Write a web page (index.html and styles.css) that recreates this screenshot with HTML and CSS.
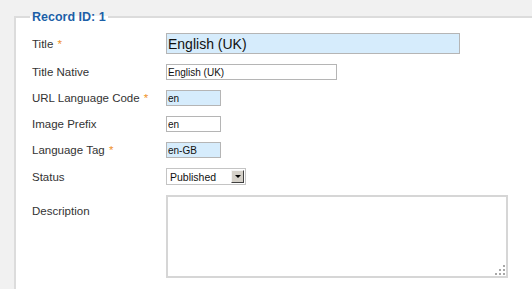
FILE: index.html
```html
<!DOCTYPE html>
<html lang="en">
<head>
  <meta charset="UTF-8" />
  <title>Edit Language</title>
  <link rel="stylesheet" href="styles.css">
</head>
<body>

  <fieldset class="record">
    <legend>Record ID: 1</legend>

    <div class="form-grid">
      <label class="form-label" for="title">Title <span class="req">*</span></label>
      <input class="field field-large field-req" id="title" type="text" value="English (UK)">

      <label class="form-label" for="title_native">Title Native</label>
      <input class="field field-medium" id="title_native" type="text" value="English (UK)">

      <label class="form-label" for="sef">URL Language Code <span class="req">*</span></label>
      <input class="field field-small field-req" id="sef" type="text" value="en">

      <label class="form-label" for="image">Image Prefix</label>
      <input class="field field-small" id="image" type="text" value="en">

      <label class="form-label" for="lang_code">Language Tag <span class="req">*</span></label>
      <input class="field field-small field-req" id="lang_code" type="text" value="en-GB">

      <label class="form-label" for="published">Status</label>
      <div class="select-box">
        <select id="published">
          <option selected>Published</option>
          <option>Unpublished</option>
          <option>Trashed</option>
        </select>
        <span class="select-btn"><span class="arrow"></span></span>
      </div>

      <label class="form-label label-top" for="description">Description</label>
      <div class="textarea-box">
        <textarea id="description"></textarea>
        <svg class="grip" width="10" height="10" viewBox="0 0 10 10">
          <rect x="8" y="0" width="2" height="2" fill="#a8a8a8"/>
          <rect x="4" y="4" width="2" height="2" fill="#a8a8a8"/>
          <rect x="8" y="4" width="2" height="2" fill="#a8a8a8"/>
          <rect x="0" y="8" width="2" height="2" fill="#a8a8a8"/>
          <rect x="4" y="8" width="2" height="2" fill="#a8a8a8"/>
          <rect x="8" y="8" width="2" height="2" fill="#a8a8a8"/>
        </svg>
      </div>
    </div>
  </fieldset>

</body>
</html>
```

FILE: styles.css
```css
body {
  margin: 0;
  background: #f1f1f1;
  font-family: 'Liberation Sans', Arial, sans-serif;
  color: #333;
  overflow: hidden;
}

.record {
  margin: 10px 0 0 14px;
  width: 600px;
  min-height: 400px;
  padding: 0 0 0 14px;
  border: 2px solid #dcdcdc;
  background: #fff;
  box-sizing: border-box;
}

.record legend {
  padding: 0 2px;
  font-size: 12.5px;
  font-weight: bold;
  color: #1d5fa7;
  line-height: 14px;
}

.form-grid {
  display: grid;
  grid-template-columns: 134px auto;
  justify-items: start;
  align-items: center;
  row-gap: 10px;
  padding: 9px 0 0 2px;
}

.form-label {
  font-size: 11.5px;
  color: #333;
}

.label-top {
  align-self: start;
  padding-top: 10px;
}

.req {
  color: #f0922a;
  margin-left: 1px;
}

.field {
  margin: 0;
  padding: 0 1px;
  border: 1px solid #b5b5b5;
  background: #fff;
  font-family: 'Liberation Sans', Arial, sans-serif;
  font-size: 10px;
  color: #111;
  box-sizing: border-box;
  outline: none;
}

.field-req {
  background: #d6ecfc;
}

.field-large {
  width: 294px;
  height: 21px;
  font-size: 14px;
}

.field-medium {
  width: 171px;
  height: 16px;
}

.field-small {
  width: 55px;
  height: 16px;
}

.select-box {
  display: flex;
  align-items: center;
  width: 80px;
  height: 17px;
  border: 1px solid #c4c4c4;
  box-sizing: border-box;
  background: #fff;
}

.select-box select {
  appearance: none;
  -webkit-appearance: none;
  flex: 1;
  min-width: 0;
  height: 100%;
  border: none;
  padding: 0 3px;
  background: transparent;
  font-family: 'Liberation Sans', Arial, sans-serif;
  font-size: 10.5px;
  color: #111;
  outline: none;
}

.select-btn {
  display: flex;
  align-items: center;
  justify-content: center;
  width: 13px;
  height: 13px;
  margin-right: 1px;
  background: #d4d0c8;
  border-top: 1px solid #f4f4f4;
  border-left: 1px solid #f4f4f4;
  border-right: 1px solid #404040;
  border-bottom: 1px solid #404040;
  box-sizing: border-box;
}

.select-btn .arrow {
  width: 0;
  height: 0;
  border-left: 3px solid transparent;
  border-right: 3px solid transparent;
  border-top: 3px solid #000;
}

.textarea-box {
  position: relative;
  width: 342px;
  height: 83px;
}

.textarea-box textarea {
  display: block;
  width: 100%;
  height: 100%;
  margin: 0;
  border: 2px solid #d6d6d6;
  box-sizing: border-box;
  resize: none;
  outline: none;
  font-family: 'Liberation Sans', Arial, sans-serif;
  font-size: 11px;
}

.grip {
  position: absolute;
  right: 3px;
  bottom: 3px;
}
```
